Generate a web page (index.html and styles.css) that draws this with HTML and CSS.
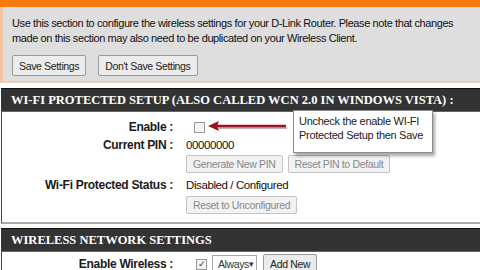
FILE: index.html
```html
<!DOCTYPE html>
<html lang="en">
<head>
    <meta charset="UTF-8">
    <title>Wireless Settings</title>
    <link rel="stylesheet" href="styles.css">
</head>
<body>
    <div class="topbar"></div>
    <div class="intro">
        <p>Use this section to configure the wireless settings for your D-Link Router. Please note that changes<br>made on this section may also need to be duplicated on your Wireless Client.</p>
        <div class="actions">
            <button class="btn">Save Settings</button>
            <button class="btn">Don't Save Settings</button>
        </div>
    </div>

    <div class="section">
        <h2>WI-FI PROTECTED SETUP (ALSO CALLED WCN 2.0 IN WINDOWS VISTA) :</h2>
        <div class="rows">
            <div class="row r1">
                <div class="label">Enable :</div>
                <div class="value"><span class="check"></span></div>
            </div>
            <div class="row r2">
                <div class="label">Current PIN :</div>
                <div class="value">00000000</div>
            </div>
            <div class="row r3">
                <div class="label"></div>
                <div class="value">
                    <button class="btn off">Generate New PIN</button>
                    <button class="btn off">Reset PIN to Default</button>
                </div>
            </div>
            <div class="row r4">
                <div class="label">Wi-Fi Protected Status :</div>
                <div class="value">Disabled / Configured</div>
            </div>
            <div class="row r5">
                <div class="label"></div>
                <div class="value"><button class="btn off">Reset to Unconfigured</button></div>
            </div>
        </div>
    </div>

    <div class="section second">
        <h2>WIRELESS NETWORK SETTINGS</h2>
        <div class="rows">
            <div class="row r1">
                <div class="label">Enable Wireless :</div>
                <div class="value">
                    <span class="check on">&#10003;</span>
                    <span class="select">Always <span class="caret">&#9662;</span></span>
                    <button class="btn small">Add New</button>
                </div>
            </div>
        </div>
    </div>

    <!-- annotation over the screenshot -->
    <svg class="arrow" width="82" height="14" viewBox="0 0 82 14">
        <path d="M10 6 L79 6" stroke="#c9b0b0" stroke-width="2" transform="translate(1,2)"/>
        <path d="M10 6 L79 6" stroke="#961420" stroke-width="2.5"/>
        <path d="M1 6 L12 1 L10 6 L12 11 Z" fill="#961420"/>
    </svg>
    <div class="tooltip">Uncheck the enable WI-FI<br>Protected Setup then Save</div>
</body>
</html>
```

FILE: styles.css
```css
body {
    margin: 0;
    background: #ffffff;
    font-family: "Liberation Sans", Tahoma, sans-serif;
    font-size: 11px;
    color: #000;
    width: 480px;
    height: 270px;
    overflow: hidden;
    position: relative;
}
.topbar {
    height: 7px;
    background: #f77a10;
}
.intro {
    background: #dedede;
    border-left: 3px solid #f1c4a4;
    border-bottom: 2px solid #efcfb6;
    padding: 9px 0 0 9px;
    box-sizing: border-box;
    height: 76px;
}
.intro p {
    margin: 0;
    line-height: 15px;
    font-size: 11px;
    letter-spacing: -0.4px;
    color: #111;
    white-space: nowrap;
}
.actions {
    margin-top: 9px;
    display: flex;
    gap: 12px;
}
.btn {
    font-family: "Liberation Sans", Tahoma, sans-serif;
    font-size: 10.5px;
    letter-spacing: -0.35px;
    background: #ececec;
    border: 1px solid #9a9a9a;
    border-radius: 2px;
    padding: 0 6px;
    height: 21px;
    color: #222;
    margin: 0;
}
.btn.off {
    color: #888;
    border-color: #c4c4c4;
    background: #f2f2f2;
    height: 18px;
    padding: 0 6px;
}
.section {
    margin-top: 5px;
    margin-left: 1px;
}
.section h2 {
    margin: 0;
    height: 22px;
    line-height: 23px;
    background: #333333;
    border-top: 1px solid #111;
    border-bottom: 1px solid #666;
    color: #fff;
    font-family: "Liberation Serif", "Times New Roman", serif;
    font-weight: bold;
    font-size: 12.5px;
    padding-left: 10px;
    white-space: nowrap;
}
.rows {
    border-left: 1px solid #444;
    border-bottom: 2px solid #a9a9a9;
    padding: 6px 0 7px;
    display: flex;
    flex-direction: column;
}
.section.second {
    margin-top: 4px;
}
.section.second .rows {
    border-bottom: none;
    padding-top: 3px;
}
.row {
    display: flex;
    align-items: center;
}
.r1 { height: 18px; }
.r2 { height: 17px; }
.r3 { height: 22px; }
.r4 { height: 19px; }
.r5 { height: 21px; }
.label {
    width: 171px;
    text-align: right;
    font-weight: bold;
    font-size: 12px;
    letter-spacing: -0.3px;
    color: #1a1a1a;
}
.value {
    margin-left: 13px;
    display: flex;
    align-items: center;
    gap: 5px;
    font-size: 11.5px;
    letter-spacing: -0.4px;
    color: #111;
}
.check {
    display: inline-block;
    width: 9px;
    height: 9px;
    border: 1px solid #999;
    background: #f4f4f4;
    margin-left: 8px;
    font-size: 9px;
    line-height: 9px;
    text-align: center;
    color: #333;
}
.check.on {
    margin-left: 10px;
}
.select {
    border: 1px solid #aaa;
    height: 16px;
    line-height: 17px;
    font-size: 10.5px;
    padding: 0 4px 0 5px;
    color: #333;
    width: 34px;
    display: inline-flex;
    justify-content: space-between;
}
.caret {
    font-size: 9px;
}
.btn.small {
    height: 20px;
    padding: 0 6px;
    margin-left: 1px;
}
.arrow {
    position: absolute;
    left: 207px;
    top: 120px;
}
.tooltip {
    position: absolute;
    left: 293px;
    top: 110px;
    width: 128px;
    height: 35px;
    padding: 3px 5px;
    background: #fff;
    border: 1px solid #8c8c8c;
    box-shadow: 2px 3px 3px rgba(0, 0, 0, 0.35);
    font-family: "Liberation Sans", Arial, sans-serif;
    font-size: 11px;
    letter-spacing: -0.3px;
    line-height: 14px;
    color: #222;
    white-space: nowrap;
}
```
